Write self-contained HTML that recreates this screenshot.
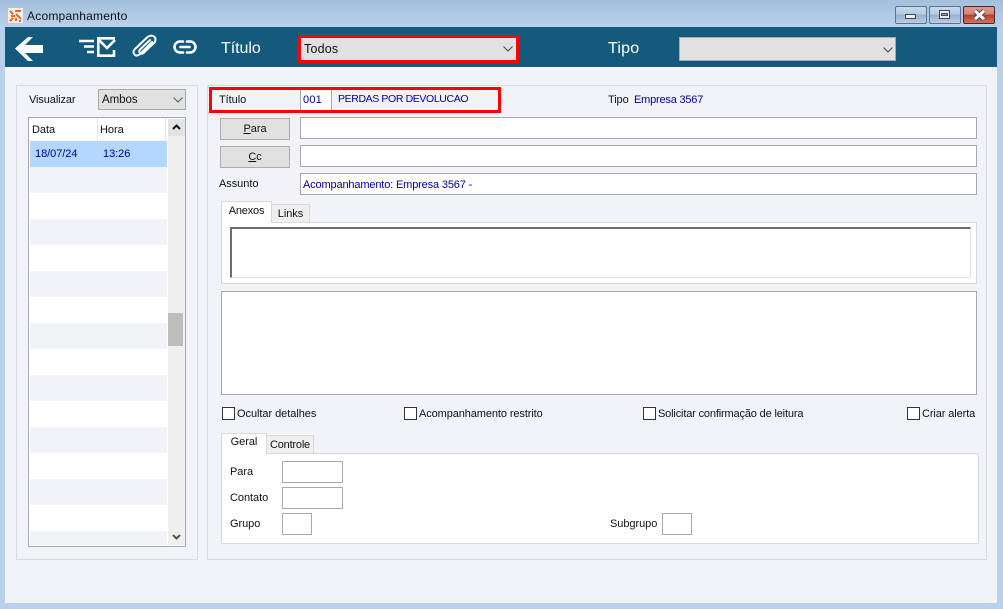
<!DOCTYPE html>
<html lang="pt"><head><meta charset="utf-8"><title>Acompanhamento</title>
<style>
html,body{margin:0;padding:0;width:1003px;height:609px;overflow:hidden;background:#b9d1ea}
*{box-sizing:border-box}
body{font-family:"Liberation Sans",sans-serif;font-size:11px;color:#111;position:relative;letter-spacing:-.05px}
.a{position:absolute}
.t{position:absolute;white-space:nowrap;line-height:14px}
.b{color:#00009a}
.i{position:absolute;background:#fff;border:1px solid #a9a9a9}
.sel{position:absolute;background:#e1e1e1;border:1px solid #a9a9a9}
.btn{position:absolute;background:#e1e1e1;border:1px solid #adadad;text-align:center;line-height:21px}
.cb{position:absolute;width:13px;height:13px;background:#fff;border:1px solid #333}
.pan{position:absolute;border:1px solid #d9dbdf}
.tab{position:absolute;border:1px solid #d9d9d9;text-align:center}
.u{text-decoration:underline}
svg{position:absolute;overflow:visible}
</style></head><body>
<div class="a" style="left:0;top:0;width:1003px;height:27px;background:linear-gradient(#a3bfdb,#b9d1ea)"></div>
<div class="a" style="left:8px;top:8px;width:15px;height:15px;background:#f3f3f3"></div>
<svg style="left:9px;top:9px" width="13" height="13" fill="none" stroke="#f0661e" stroke-width="2"><path d="M1 2l3 3M6 2h6M2 7h4M7 5l5 5M1 12l3-3M7 9v3M11 11v2"/></svg>
<div class="t" style="left:27px;top:9px;font-size:12px;letter-spacing:.22px">Acompanhamento</div>

<div class="a" style="left:895px;top:6px;width:32px;height:18px;border:1px solid #5f7390;border-radius:2px;background:linear-gradient(#c7d9ec 0,#b3cbe3 45%,#93b1d1 50%,#b8cfe6 100%)"></div>
<div class="a" style="left:905px;top:14px;width:11px;height:5px;background:#eee;border:1px solid #3d4a5c"></div>
<div class="a" style="left:929px;top:6px;width:32px;height:18px;border:1px solid #5f7390;border-radius:2px;background:linear-gradient(#c7d9ec 0,#b3cbe3 45%,#93b1d1 50%,#b8cfe6 100%)"></div>
<div class="a" style="left:939px;top:10px;width:11px;height:9px;background:#eee;border:1px solid #3d4a5c"></div>
<div class="a" style="left:941px;top:13px;width:7px;height:3px;background:#8fa6c0;border:1px solid #3d4a5c"></div>
<div class="a" style="left:963px;top:6px;width:32px;height:18px;border:1px solid #55202c;border-radius:2px;background:linear-gradient(#dc9c90 0,#d58275 45%,#b93a26 50%,#d27463 100%)"></div>
<svg style="left:973px;top:10px" width="13" height="10"><path d="M2 1l9 8M11 1l-9 8" stroke="#3d4a5c" stroke-width="5"/><path d="M2 1l9 8M11 1l-9 8" stroke="#fff" stroke-width="3"/></svg>

<div class="a" style="left:5px;top:27px;width:992px;height:576px;background:#f1f3f9"></div>
<div class="a" style="left:5px;top:27px;width:992px;height:40px;background:#135a7c"></div>

<svg style="left:15px;top:37px" width="28" height="24" fill="#fff"><path d="M0 11.500L13 0h5l-8 8h18v8H10l8 8h-5z"/></svg>
<svg style="left:78px;top:37px" width="38" height="22" fill="none" stroke="#fff" stroke-width="2.600"><path d="M1 4h15M6 9.500h10M9 15h7"/><path d="M20.300 20V1.300H37M20.300 18.700H37M36 13v7M21 3l8 8 8-8"/></svg>
<svg style="left:133px;top:35px" width="26" height="23" fill="none" stroke="#fff" stroke-width="2" stroke-linecap="round"><path d="M19 7L7 19c-2 2-4 2-5.500.5S0 16 2 14L14 2.500c2-2 5-2.500 7-1s2 4.500 0 6.500L10.500 18c-1 1-2.500 1-3.500 0s-1-2.500 0-3.500L17 5"/></svg>
<svg style="left:173px;top:40px" width="25" height="15" fill="none" stroke="#fff" stroke-width="2.600" stroke-linecap="round"><path d="M10 1.500H7C4 1.500 1.500 4 1.500 7S4 12.500 7 12.500h3M14 1.500h3c3 0 5.500 2.500 5.500 5.500S20 12.500 17 12.500h-3M7.500 7h9"/></svg>

<div class="t" style="left:221px;top:39px;font-size:16px;line-height:20px;color:#fff">Título</div>
<div class="a" style="left:298px;top:35px;width:221px;height:28px;border:3px solid #f00;background:#e1e1e1"></div>
<div class="t" style="left:304px;top:42px;font-size:12.500px;letter-spacing:.2px">Todos</div>
<svg style="left:503px;top:46px" width="10" height="6" fill="none" stroke="#444"><path d="M.5.500l4.500 4.500 4.500-4.500"/></svg>
<div class="t" style="left:608px;top:39px;font-size:16px;line-height:20px;color:#fff;letter-spacing:.2px">Tipo</div>
<div class="sel" style="left:679px;top:37px;width:217px;height:24px"></div>
<svg style="left:883px;top:47px" width="10" height="6" fill="none" stroke="#444"><path d="M.5.500l4.500 4.500 4.500-4.500"/></svg>

<!-- left panel -->
<div class="pan" style="left:16px;top:85px;width:182px;height:475px"></div>
<div class="t" style="left:29px;top:93px;letter-spacing:-.1px">Visualizar</div>
<div class="sel" style="left:98px;top:89px;width:88px;height:21px"></div>
<div class="t" style="left:102px;top:93px;font-size:11.500px">Ambos</div>
<svg style="left:173px;top:97px" width="10" height="6" fill="none" stroke="#555"><path d="M.5.500l4.500 4.500 4.500-4.500"/></svg>

<div class="a" style="left:28px;top:117px;width:158px;height:430px;background:#fff;border:1px solid #a9a9a9"></div>
<div class="a" style="left:97px;top:118px;width:1px;height:23px;background:#e6e6e6"></div>
<div class="a" style="left:165px;top:118px;width:1px;height:23px;background:#e6e6e6"></div>
<div class="t" style="left:32px;top:123px">Data</div>
<div class="t" style="left:100px;top:123px">Hora</div>
<div class="a" style="left:30px;top:141px;width:137px;height:26px;background:#b3d7ff"></div>
<div class="t b" style="left:35px;top:147px">18/07/24</div>
<div class="t b" style="left:103px;top:147px">13:26</div>
<div class="a" style="left:30px;top:167px;width:137px;height:26px;background:#f1f3f9"></div>
<div class="a" style="left:30px;top:219px;width:137px;height:26px;background:#f1f3f9"></div>
<div class="a" style="left:30px;top:271px;width:137px;height:26px;background:#f1f3f9"></div>
<div class="a" style="left:30px;top:323px;width:137px;height:26px;background:#f1f3f9"></div>
<div class="a" style="left:30px;top:375px;width:137px;height:26px;background:#f1f3f9"></div>
<div class="a" style="left:30px;top:427px;width:137px;height:26px;background:#f1f3f9"></div>
<div class="a" style="left:30px;top:479px;width:137px;height:26px;background:#f1f3f9"></div>
<div class="a" style="left:30px;top:531px;width:137px;height:14px;background:#f1f3f9"></div>
<div class="a" style="left:168px;top:119px;width:17px;height:426px;background:#efefef"></div>
<div class="a" style="left:168px;top:119px;width:17px;height:17px;background:#e3e3e3"></div>
<div class="a" style="left:168px;top:313px;width:15px;height:33px;background:#bdbdbd"></div>
<svg style="left:172px;top:124px" width="9" height="6" fill="none" stroke="#111" stroke-width="2"><path d="M1 5l3.500-3.500L8 5"/></svg>
<svg style="left:172px;top:534px" width="9" height="6" fill="none" stroke="#555" stroke-width="2"><path d="M1 1l3.500 3.500L8 1"/></svg>

<!-- right panel -->
<div class="pan" style="left:207px;top:85px;width:780px;height:475px"></div>
<div class="a" style="left:209px;top:87px;width:292px;height:26px;border:3px solid #f00"></div>
<div class="t" style="left:219px;top:93px">Título</div>
<div class="a" style="left:300px;top:90px;width:32px;height:20px;background:#fff;border-left:1px solid #a9a9a9;border-right:1px solid #a9a9a9"></div>
<div class="t b" style="left:303px;top:93px;letter-spacing:.2px">001</div>
<div class="t b" style="left:338px;top:92px;font-size:10.500px;letter-spacing:-.38px">PERDAS POR DEVOLUCAO</div>
<div class="t" style="left:608px;top:93px;letter-spacing:-.1px">Tipo</div>
<div class="t b" style="left:634px;top:93px;letter-spacing:-.2px">Empresa 3567</div>

<div class="btn" style="left:220px;top:118px;width:70px;height:22px"><span class="u">P</span>ara</div>
<div class="btn" style="left:220px;top:146px;width:70px;height:22px"><span class="u">C</span>c</div>
<div class="i" style="left:300px;top:117px;width:677px;height:22px"></div>
<div class="i" style="left:300px;top:145px;width:677px;height:22px"></div>
<div class="i" style="left:300px;top:173px;width:677px;height:22px"></div>
<div class="t" style="left:219px;top:177px">Assunto</div>
<div class="t b" style="left:303px;top:178px;letter-spacing:-.15px">Acompanhamento: Empresa 3567 -</div>

<div class="a" style="left:221px;top:222px;width:756px;height:62px;background:#fff;border:1px solid #d9d9d9"></div>
<div class="tab" style="left:271px;top:204px;width:39px;height:19px;background:#efefef;line-height:18px">Links</div>
<div class="tab" style="left:221px;top:201px;width:51px;height:22px;background:#fff;border-bottom:0;line-height:19px;z-index:2;letter-spacing:-.2px">Anexos</div>
<div class="a" style="left:230px;top:227px;width:741px;height:51px;background:#fff;border-top:2px solid #6d6d6d;border-left:2px solid #6d6d6d;border-right:1px solid #e3e3e3;border-bottom:1px solid #e3e3e3"></div>

<div class="i" style="left:221px;top:291px;width:756px;height:104px"></div>

<div class="cb" style="left:222px;top:407px"></div>
<div class="t" style="left:237px;top:407px">Ocultar detalhes</div>
<div class="cb" style="left:404px;top:407px"></div>
<div class="t" style="left:419px;top:407px;letter-spacing:-.1px">Acompanhamento restrito</div>
<div class="cb" style="left:643px;top:407px"></div>
<div class="t" style="left:658px;top:407px;letter-spacing:-.16px">Solicitar confirmação de leitura</div>
<div class="cb" style="left:907px;top:407px"></div>
<div class="t" style="left:922px;top:407px;letter-spacing:-.1px">Criar alerta</div>

<div class="a" style="left:221px;top:453px;width:758px;height:91px;background:#fff;border:1px solid #d9d9d9"></div>
<div class="tab" style="left:266px;top:435px;width:48px;height:19px;background:#efefef;line-height:18px;letter-spacing:-.2px">Controle</div>
<div class="tab" style="left:221px;top:433px;width:46px;height:21px;background:#fff;border-bottom:0;line-height:17px;z-index:2">Geral</div>
<div class="t" style="left:230px;top:465px">Para</div>
<div class="i" style="left:282px;top:461px;width:61px;height:22px"></div>
<div class="t" style="left:230px;top:491px">Contato</div>
<div class="i" style="left:282px;top:487px;width:61px;height:22px"></div>
<div class="t" style="left:230px;top:517px">Grupo</div>
<div class="i" style="left:282px;top:513px;width:30px;height:22px"></div>
<div class="t" style="left:610px;top:517px">Subgrupo</div>
<div class="i" style="left:662px;top:513px;width:30px;height:22px"></div>
</body></html>
